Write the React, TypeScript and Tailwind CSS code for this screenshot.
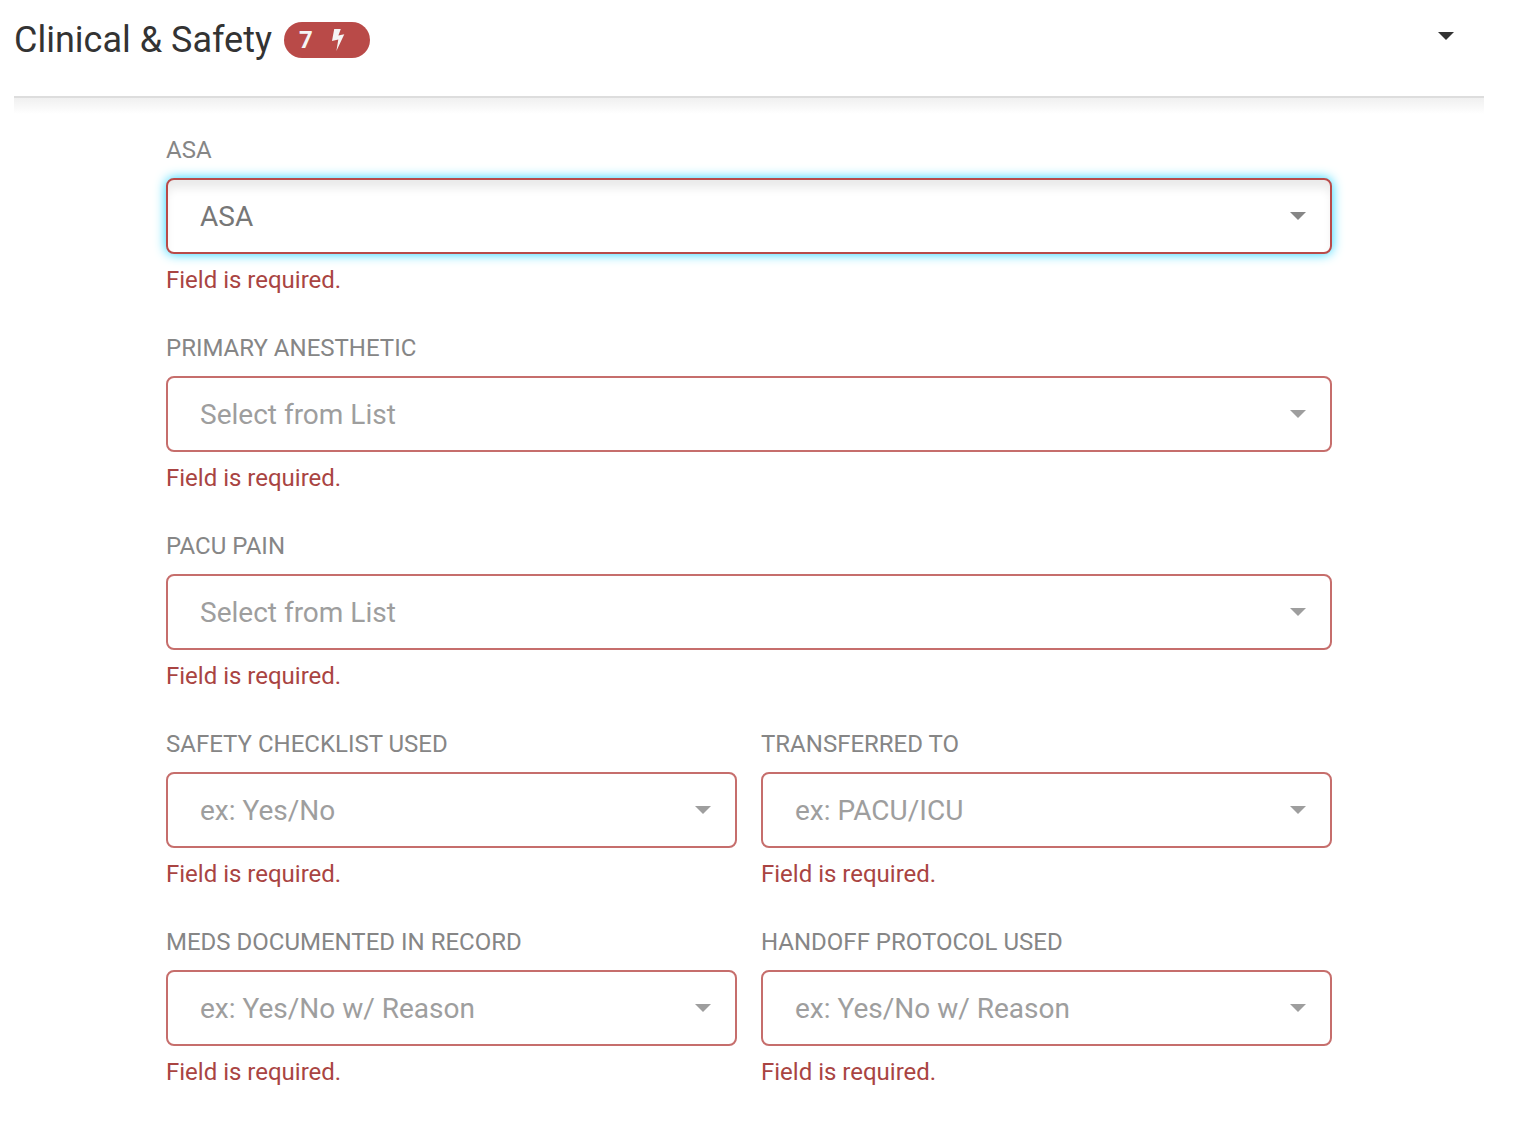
import { useState } from "react";
import clsx from "clsx";

type Field = {
  id: string;
  label: string;
  placeholder: string;
  half?: boolean;
  active?: boolean;
};

const fields: Field[] = [
  { id: "asa", label: "ASA", placeholder: "ASA", active: true },
  {
    id: "anesthetic",
    label: "Primary Anesthetic",
    placeholder: "Select from List",
  },
  { id: "pain", label: "PACU Pain", placeholder: "Select from List" },
  {
    id: "checklist",
    label: "Safety Checklist Used",
    placeholder: "ex: Yes/No",
    half: true,
  },
  {
    id: "transferred",
    label: "Transferred To",
    placeholder: "ex: PACU/ICU",
    half: true,
  },
  {
    id: "meds",
    label: "Meds Documented in Record",
    placeholder: "ex: Yes/No w/ Reason",
    half: true,
  },
  {
    id: "handoff",
    label: "Handoff Protocol Used",
    placeholder: "ex: Yes/No w/ Reason",
    half: true,
  },
];

function Caret({ className }: { className?: string }) {
  return (
    <svg
      viewBox="0 0 16 8"
      fill="currentColor"
      aria-hidden="true"
      className={clsx("w-4 h-2", className)}
    >
      <path d="M0 0h16L8 8z" />
    </svg>
  );
}

function SelectField({ id, label, placeholder, half, active }: Field) {
  return (
    <div className={half ? "col-span-1" : "col-span-2"}>
      <label
        htmlFor={id}
        className="block text-2xl leading-8 uppercase text-[#868686]"
      >
        {label}
      </label>
      <div className={clsx("relative mt-3", !active && "opacity-80")}>
        <select
          id={id}
          aria-invalid="true"
          aria-describedby={`${id}-error`}
          className={clsx(
            "block w-full h-19 appearance-none rounded-lg border-2 border-[#b94a48] bg-white pt-[2px] pl-8 pr-16 text-[28px] outline-none",
            active
              ? "text-[#777777] shadow-[0_0_12px_#22d3ff,inset_0_10px_10px_-2px_#eaeaea]"
              : "text-[#878787]"
          )}
        >
          <option>{placeholder}</option>
        </select>
        <Caret className="absolute right-[26px] top-[34px] pointer-events-none text-[#868686]" />
      </div>
      <p id={`${id}-error`} className="mt-[10px] text-2xl leading-8 text-[#a94442]">
        Field is required.
      </p>
    </div>
  );
}

export default function App() {
  const [open, setOpen] = useState(true);

  return (
    <main className="min-h-screen bg-white pl-[14px] pr-[30px] font-[Roboto,sans-serif]">
      {/* Section header */}
      <header className="flex h-24 items-start justify-between pt-4 pr-[30px]">
        <div className="flex items-center gap-3">
          <h1 className="text-4xl leading-12 text-[#333333]">
            Clinical &amp; Safety
          </h1>
          <span className="flex h-9 items-center gap-[18px] rounded-full bg-[#b94a48] pl-[15px] pr-[25px] text-2xl font-bold text-[#f5f5f5]">
            7
            <svg
              viewBox="0 0 14 24"
              fill="currentColor"
              aria-hidden="true"
              className="w-[14px] h-6"
            >
              <path d="M3.2 1h6.6L7.4 7.4l5.9-1.2L5.4 23l1.9-11.6L1 12.9z" />
            </svg>
          </span>
        </div>
        <button
          type="button"
          aria-label="Toggle section"
          aria-expanded={open}
          onClick={() => setOpen(!open)}
          className="flex h-10 items-center cursor-pointer text-[#333333]"
        >
          <Caret />
        </button>
      </header>

      {/* Section body */}
      {open && (
        <section className="border-t-2 border-[#dddddd] bg-linear-to-b from-[#f0f0f0] to-white bg-size-[100%_16px] bg-no-repeat px-[152px] pt-9 pb-12">
          <form className="grid grid-cols-2 gap-x-6 gap-y-9">
            {fields.map((field) => (
              <SelectField key={field.id} {...field} />
            ))}
          </form>
        </section>
      )}
    </main>
  );
}
